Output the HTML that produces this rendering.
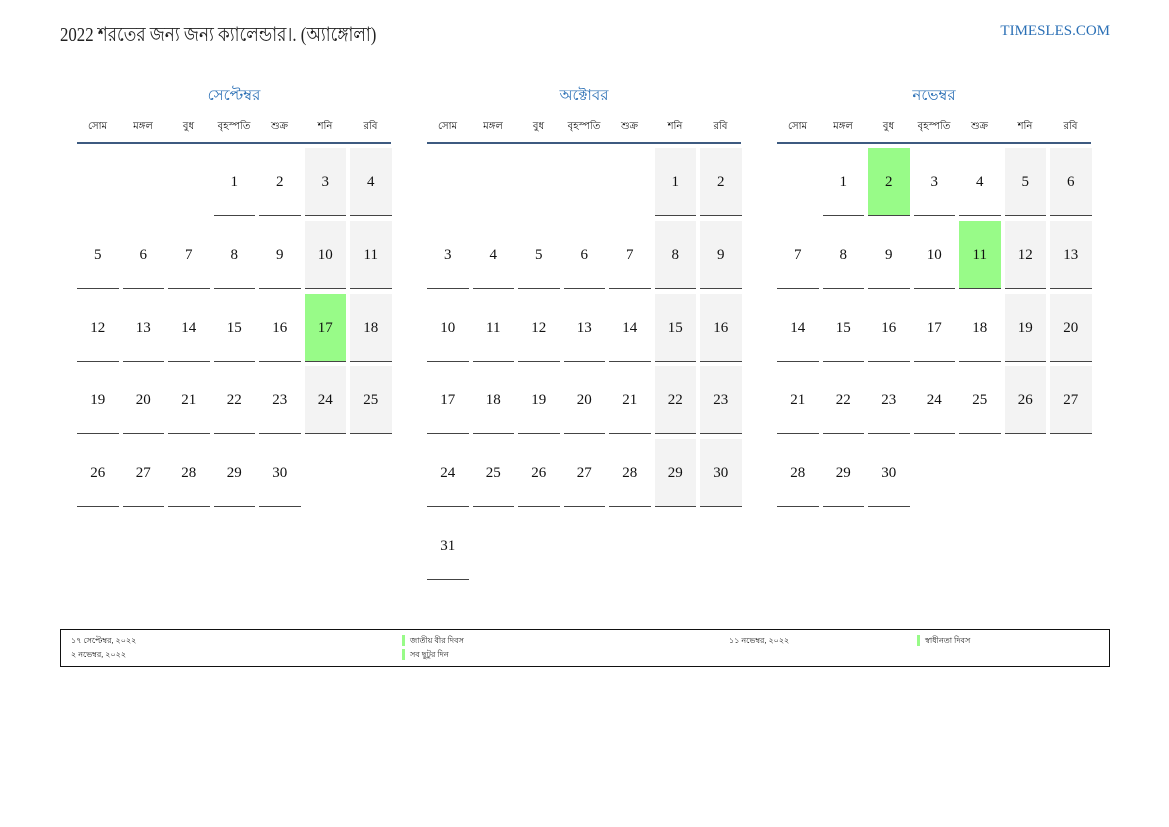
<!DOCTYPE html>
<html><head><meta charset="utf-8">
<style>
body{margin:0;width:1169px;height:827px;background:#fff;position:relative;font-family:"Liberation Serif","Noto Serif CJK SC",serif;overflow:hidden}
.abs{position:absolute}
.title{left:60px;top:20px;font-size:20px;color:#222;transform:scaleX(0.84);transform-origin:left top;white-space:nowrap}
.site{right:59px;top:23px;font-size:15px;color:#2a6fb5}
.mname{font-size:15px;color:#2a6fb5;text-align:center;width:314px;top:84px}
.wd{font-size:10px;color:#111;text-align:center;width:41px;top:119px}
.hl{height:2px;background:#3d5a80;width:314px;top:142px}
.cell{width:41.5px;height:67px;font-size:15px;color:#111;text-align:center;line-height:68px;border-bottom:1.5px solid #444}
.we{background:#f3f3f3}
.g{background:#98fb88}
.leg{left:60px;top:629px;width:1048px;height:36px;border:1.5px solid #111;font-size:8px;color:#222}
.bar{width:3px;height:11px;background:#98fb88}
</style></head><body>
<div class="abs title">2022 শরতের জন্য জন্য ক্যালেন্ডার।. (অ্যাঙ্গোলা)</div>
<div class="abs site">TIMESLES.COM</div>
<div id="cal"></div>
<div class="abs leg">
<div class="abs" style="left:10px;top:5px">১৭ সেপ্টেম্বর, ২০২২</div>
<div class="abs" style="left:10px;top:19px">২ নভেম্বর, ২০২২</div>
<div class="abs bar" style="left:341px;top:5px"></div><div class="abs" style="left:349px;top:5px">জাতীয় বীর দিবস</div>
<div class="abs bar" style="left:341px;top:19px"></div><div class="abs" style="left:349px;top:19px">সব ছুটুর দিন</div>
<div class="abs" style="left:668px;top:5px">১১ নভেম্বর, ২০২২</div>
<div class="abs bar" style="left:856px;top:5px"></div><div class="abs" style="left:864px;top:5px">স্বাধীনতা দিবস</div>
</div>
<script>
var months=[["সেপ্টেম্বর",77,3,30,[17]],["অক্টোবর",427,5,31,[]],["নভেম্বর",777,1,30,[2,11]]];
var wds=["সোম","মঙ্গল","বুধ","বৃহস্পতি","শুক্র","শনি","রবি"];
var h="";
months.forEach(function(m){
 var x0=m[1];
 h+='<div class="abs mname" style="left:'+x0+'px">'+m[0]+'</div>';
 h+='<div class="abs hl" style="left:'+x0+'px"></div>';
 for(var i=0;i<7;i++)h+='<div class="abs wd" style="left:'+(x0+i*45.5)+'px">'+wds[i]+'</div>';
 for(var d=1;d<=m[3];d++){
  var p=m[2]+d-1,c=p%7,r=Math.floor(p/7);
  var cls="cell"+(m[4].indexOf(d)>=0?" g":(c>=5?" we":""));
  h+='<div class="abs '+cls+'" style="left:'+(x0+c*45.5)+'px;top:'+(148+r*72.8)+'px">'+d+'</div>';
 }
});
document.getElementById("cal").innerHTML=h;
</script>
</body></html>
